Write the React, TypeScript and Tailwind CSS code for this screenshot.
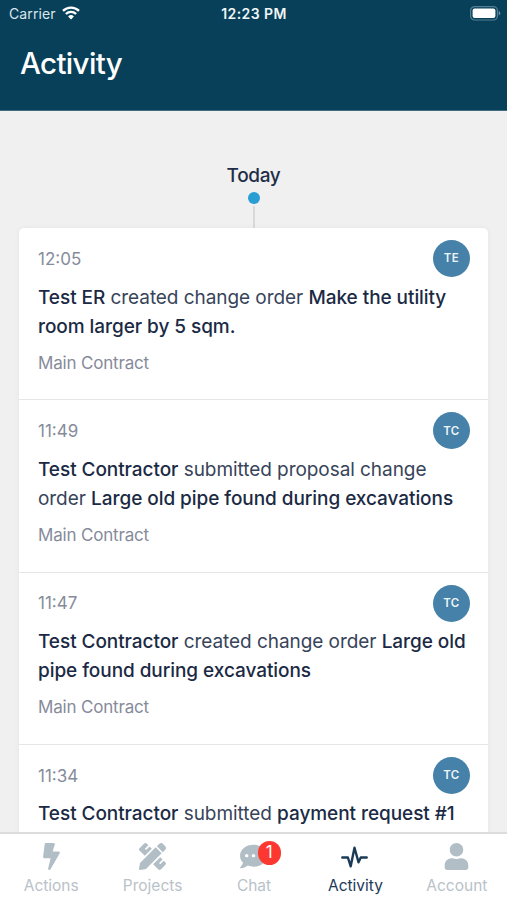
import type { ReactNode } from "react";
import { FaBolt, FaCommentDots, FaPencilRuler, FaUser } from "react-icons/fa";

const ACTIVITIES = [
  { time: "12:05", initials: "TE", actor: "Test ER", action: "created change order", subject: "Make the utility room larger by 5 sqm." },
  { time: "11:49", initials: "TC", actor: "Test Contractor", action: "submitted proposal change order", subject: "Large old pipe found during excavations" },
  { time: "11:47", initials: "TC", actor: "Test Contractor", action: "created change order", subject: "Large old pipe found during excavations" },
  { time: "11:34", initials: "TC", actor: "Test Contractor", action: "submitted", subject: "payment request #1" },
];

function StatusBar() {
  return (
    <div className="grid h-7 grid-cols-3 items-center pl-[9px] pr-[6px] text-[14px] leading-none">
      <div className="flex items-center gap-[6px]">
        <span className="tracking-[0.1px] text-[#dbe6ec]">Carrier</span>
        <svg className="-mt-[2px]" width="18" height="14" viewBox="0 0 18 14" fill="none" stroke="#fff" strokeWidth="2.4">
          <path d="M1 4.9a11.5 11.5 0 0 1 16 0" />
          <path d="M3.9 8a7.3 7.3 0 0 1 10.2 0" />
          <path d="M9 13.4 6.1 10.5a4.1 4.1 0 0 1 5.8 0z" fill="#fff" stroke="none" />
        </svg>
      </div>
      <span className="-ml-[2px] text-center font-semibold tracking-[0.4px] text-[#f0f5f7]">12:23 PM</span>
      <svg className="-mt-[1px] justify-self-end" width="31" height="15" viewBox="0 0 31 15" fill="none">
        <rect x="0.6" y="0.6" width="26.8" height="13.4" rx="4" stroke="#527f95" strokeWidth="1.2" />
        <rect x="2.6" y="2.6" width="22.8" height="9.4" rx="2" fill="#fff" />
        <path d="M28.7 5.1v4.4c1-.4 1.6-1.2 1.6-2.2s-.6-1.8-1.6-2.2z" fill="#6f93a5" />
      </svg>
    </div>
  );
}

function ActivityRow({ time, initials, actor, action, subject }: (typeof ACTIVITIES)[number]) {
  return (
    <li className="h-[172.3px] shrink-0 border-b border-[#e6e6e6] pt-3 pr-[18px] pl-[19px]">
      <div className="flex h-[37px] items-center justify-between">
        <span className="pt-[2px] text-[17px] text-[#868b9b]">{time}</span>
        <span className="flex size-[37px] items-center justify-center rounded-full bg-[#4581a8] pt-[1px] text-[11.5px] font-semibold tracking-[0.4px] text-[#eef5f9]">
          {initials}
        </span>
      </div>
      <p className="mt-[5.6px] text-[19px] leading-[29.3px] tracking-[-0.06px] text-[#37445a]">
        <span className="font-medium text-[#1b2a44]">{actor}</span> {action}{" "}
        <span className="font-medium text-[#1b2a44]">{subject}</span>
      </p>
      <p className="mt-[8.4px] text-[17px] leading-[26px] tracking-[-0.18px] text-[#868b9b]">Main Contract</p>
    </li>
  );
}

function Tab({ label, active, children }: { label: string; active?: boolean; children: ReactNode }) {
  return (
    <a className={`flex flex-1 flex-col items-center pt-2 ${active ? "text-[#1b3a56]" : "text-[#b2bec5]"}`}>
      <span className="relative flex h-[29px] items-center justify-center">{children}</span>
      <span className={`mt-[5px] ml-[1px] text-[15.5px] leading-[20px] ${active ? "text-[#1b3a56]" : "text-[#b9c2c8]"}`}>{label}</span>
    </a>
  );
}

export default function App() {
  return (
    <div className="flex h-[900px] w-[507px] flex-col overflow-hidden bg-[#f0f0f0] font-['Inter','Liberation_Sans',sans-serif]">
      <header className="h-[111px] shrink-0 border-b border-[#416c80] bg-[#084059] text-white">
        <StatusBar />
        <h1 className="mt-[14px] pl-[20px] text-[29.5px] font-medium leading-[42px] tracking-[-0.65px]">Activity</h1>
      </header>

      <main className="flex min-h-0 flex-1 flex-col overflow-hidden px-[19px] pt-[50px]">
        {/* Day marker */}
        <div className="flex h-[67px] shrink-0 flex-col items-center">
          <h2 className="pt-[1px] text-[19px] font-medium leading-[28px] tracking-[-0.35px] text-[#1f2d48]">Today</h2>
          <span className="mt-[2px] size-3 shrink-0 rounded-full bg-[#2a9dd3]" />
          <span className="mt-[2px] w-[2px] flex-1 bg-[#d9d9d9]" />
        </div>

        <ul className="flex flex-col rounded-t-[5px] bg-white shadow-[0_0_5px_rgba(0,0,0,0.05)]">
          {ACTIVITIES.map((activity) => (
            <ActivityRow key={activity.time} {...activity} />
          ))}
        </ul>
      </main>

      <nav className="z-10 flex h-[68px] shrink-0 border-t-2 border-[#dcdcdc] bg-white">
        <Tab label="Actions">
          <FaBolt size={27} className="ml-[1px]" />
        </Tab>
        <Tab label="Projects">
          <FaPencilRuler size={27} className="ml-[1px]" />
        </Tab>
        <Tab label="Chat">
          <FaCommentDots size={27} />
          <span className="absolute -top-[1px] left-[17.5px] flex size-[23.5px] items-center justify-center rounded-full bg-[#fc3830] text-[17px] leading-none text-white">
            1
          </span>
        </Tab>
        <Tab label="Activity" active>
          <svg width="27" height="22" viewBox="0 0 27 22" fill="none" stroke="currentColor" strokeWidth="2.4" strokeLinecap="round" strokeLinejoin="round">
            <path d="M1.3 11.5h5.6l2.8 8.8L13.5 1.7l4 14.6 2.3-4.8h5.9" />
          </svg>
        </Tab>
        <Tab label="Account">
          <FaUser size={27} />
        </Tab>
      </nav>
    </div>
  );
}
